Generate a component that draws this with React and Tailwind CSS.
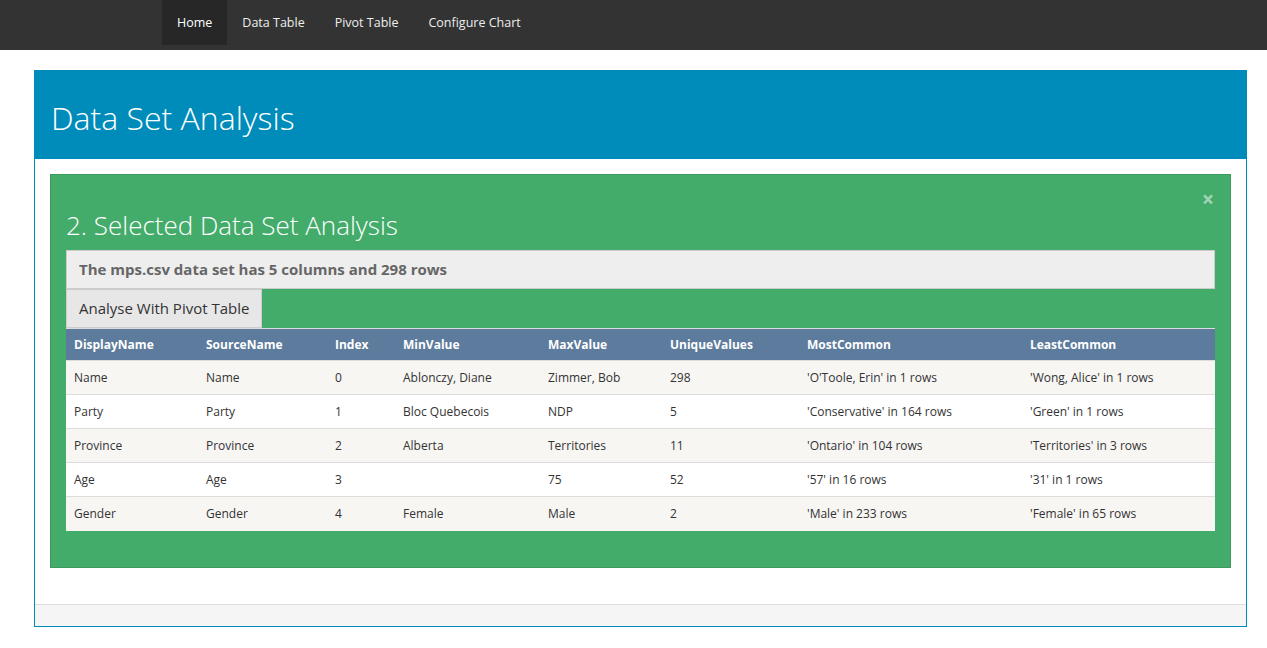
import React from "react";

const rows = [
  ["Name", "Name", "0", "Ablonczy, Diane", "Zimmer, Bob", "298", "'O'Toole, Erin' in 1 rows", "'Wong, Alice' in 1 rows"],
  ["Party", "Party", "1", "Bloc Quebecois", "NDP", "5", "'Conservative' in 164 rows", "'Green' in 1 rows"],
  ["Province", "Province", "2", "Alberta", "Territories", "11", "'Ontario' in 104 rows", "'Territories' in 3 rows"],
  ["Age", "Age", "3", "", "75", "52", "'57' in 16 rows", "'31' in 1 rows"],
  ["Gender", "Gender", "4", "Female", "Male", "2", "'Male' in 233 rows", "'Female' in 65 rows"],
];

const headers = ["DisplayName", "SourceName", "Index", "MinValue", "MaxValue", "UniqueValues", "MostCommon", "LeastCommon"];
const widths = ["w-[132px]", "w-[129px]", "w-[68px]", "w-[145px]", "w-[122px]", "w-[137px]", "w-[223px]", ""];

export default function App() {
  return (
    <div className="min-h-[648px] bg-white font-['Open_Sans',sans-serif] text-[#222]">
      <nav className="h-[50px] bg-[#333] pl-[162px] flex items-start">
        <ul className="flex text-[12.5px] text-[#eee]">
          <li className="h-[45px] px-[15px] pt-[2px] flex items-center bg-[#272727] text-white">Home</li>
          <li className="h-[45px] px-[15px] pt-[2px] flex items-center">Data Table</li>
          <li className="h-[45px] px-[15px] pt-[2px] flex items-center">Pivot Table</li>
          <li className="h-[45px] px-[15px] pt-[2px] flex items-center">Configure Chart</li>
        </ul>
      </nav>

      <div className="ml-[34px] mt-[20px] w-[1213px] border border-[#008cba]">
        <div className="h-[88px] bg-[#008cba] px-[16px] flex items-center">
          <h1 className="text-[32px] font-light text-white leading-none pt-[6px]">Data Set Analysis</h1>
        </div>
        <div className="p-[15px] pb-[36px]">
          <div className="relative bg-[#43ac6a] border border-[#3c9a5f] px-[15px] pt-[34px] pb-[36px]">
            <span className="absolute right-[16px] top-[14px] text-[21px] font-bold text-white opacity-50 leading-none">×</span>
            <h2 className="text-[26px] font-light text-white leading-[32px] mb-[9px]">2. Selected Data Set Analysis</h2>
            <div className="h-[39px] bg-[#eee] border border-[#ccc] px-[12px] flex items-center text-[15px] font-bold text-[#666]">
              The mps.csv data set has 5 columns and 298 rows
            </div>
            <div className="flex">
              <button className="h-[39px] bg-[#e7e7e7] border border-[#ccc] px-[12px] text-[15px] text-[#333]">
                Analyse With Pivot Table
              </button>
            </div>
            <table className="w-full border-collapse text-[12px]">
              <thead>
                <tr className="h-[32px] bg-[#5d7b9d] text-white border-t border-[#ddd]">
                  {headers.map((h, i) => (
                    <th key={h} className={`text-left font-bold px-[8px] ${widths[i]}`}>{h}</th>
                  ))}
                </tr>
              </thead>
              <tbody>
                {rows.map((r, ri) => (
                  <tr key={ri} className={`h-[34px] border-t border-[#ddd] ${ri % 2 === 0 ? "bg-[#f7f6f3]" : "bg-white"}`}>
                    {r.map((c, ci) => (
                      <td key={ci} className="px-[8px] text-[#333]">{c}</td>
                    ))}
                  </tr>
                ))}
              </tbody>
            </table>
          </div>
        </div>
        <div className="h-[22px] bg-[#f5f5f5] border-t border-[#ddd]"></div>
      </div>
    </div>
  );
}
